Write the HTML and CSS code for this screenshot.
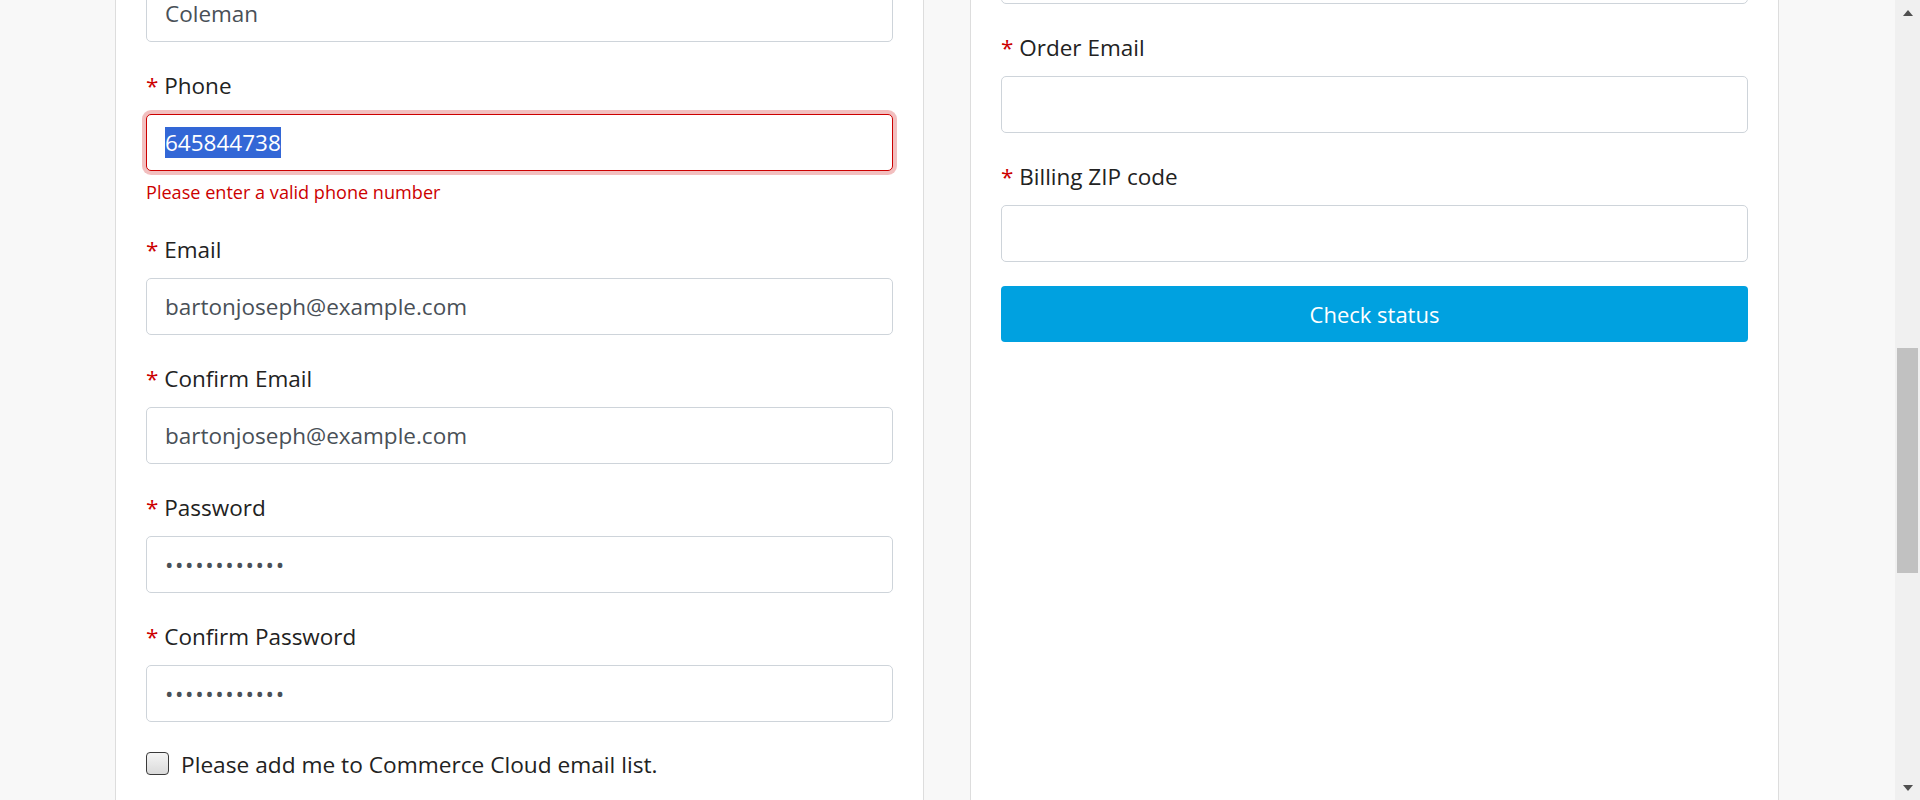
FILE: index.html
```html
<!DOCTYPE html>
<html lang="en">
<head>
<meta charset="utf-8">
<title>Create account</title>
<link rel="stylesheet" href="styles.css">
</head>
<body>
<div class="page">
  <main class="main">
    <div class="columns">
      <section class="card">
        <form class="form">
          <div class="form-group form-group--cut-left">
            <input class="form-control" type="text" value="Coleman">
          </div>
          <div class="form-group">
            <label class="form-label"><span class="req">*</span> Phone</label>
            <div class="form-control form-control--invalid"><span class="selected">645844738</span></div>
            <div class="invalid-feedback">Please enter a valid phone number</div>
          </div>
          <div class="form-group">
            <label class="form-label"><span class="req">*</span> Email</label>
            <input class="form-control" type="email" value="bartonjoseph@example.com">
          </div>
          <div class="form-group">
            <label class="form-label"><span class="req">*</span> Confirm Email</label>
            <input class="form-control" type="email" value="bartonjoseph@example.com">
          </div>
          <div class="form-group">
            <label class="form-label"><span class="req">*</span> Password</label>
            <input class="form-control form-control--password" type="password" value="abcdefghijkl">
          </div>
          <div class="form-group">
            <label class="form-label"><span class="req">*</span> Confirm Password</label>
            <input class="form-control form-control--password" type="password" value="abcdefghijkl">
          </div>
          <label class="form-check">
            <input type="checkbox" class="check">
            <span class="check-label">Please add me to Commerce Cloud email list.</span>
          </label>
        </form>
      </section>
      <section class="card">
        <form class="form">
          <div class="form-group form-group--cut-right">
            <input class="form-control" type="text">
          </div>
          <div class="form-group">
            <label class="form-label"><span class="req">*</span> Order Email</label>
            <input class="form-control" type="email">
          </div>
          <div class="form-group form-group--tight">
            <label class="form-label"><span class="req">*</span> Billing ZIP code</label>
            <input class="form-control" type="text">
          </div>
          <button type="button" class="btn-primary">Check status</button>
        </form>
      </section>
    </div>
  </main>
  <div class="scrollbar">
    <div class="sb-btn"><span class="sb-arrow sb-arrow--up"></span></div>
    <div class="sb-track"><div class="sb-thumb"></div></div>
    <div class="sb-btn"><span class="sb-arrow sb-arrow--down"></span></div>
  </div>
</div>
</body>
</html>
```

FILE: styles.css
```css
* { box-sizing: border-box; }
html, body { margin: 0; height: 100%; }
body {
  font-family: "Open Sans", "Liberation Sans", sans-serif;
  color: #222;
  background: #f8f8f8;
  overflow: hidden;
}
.page { display: flex; height: 800px; }
.main { flex: 1; padding-left: 115px; overflow: hidden; }
.columns {
  display: grid;
  grid-template-columns: 809px 809px;
  column-gap: 46px;
  height: 100%;
}
.card {
  background: #fff;
  border-left: 1px solid #ddd;
  border-right: 1px solid #ddd;
  padding: 0 30px;
  overflow: hidden;
}
.form-group { margin-bottom: 29px; }
.form-group--cut-left { margin-top: -15px; }
.form-group--cut-right { margin-top: -53px; }
.form-group--tight { margin-bottom: 24px; }
.form-label {
  display: block;
  font-size: 22.5px;
  line-height: 29px;
  margin-bottom: 14px;
  color: #222;
}
.req { color: #c00; }
.form-control {
  display: block;
  width: 100%;
  height: 57px;
  padding: 0 18px 1px;
  font-family: inherit;
  font-size: 22.5px;
  color: #495057;
  background: #fff;
  border: 1px solid #ced4da;
  border-radius: 5px;
  outline: none;
}
.form-control--password { letter-spacing: 1.6px; }
.form-control--invalid {
  display: flex;
  align-items: center;
  border-color: #c00;
  box-shadow: 0 0 0 4px rgba(204, 0, 0, 0.25);
}
.selected {
  background: #3367d6;
  color: #fff;
  line-height: 31px;
}
.invalid-feedback {
  color: #c00;
  font-size: 18.1px;
  line-height: 28px;
  margin-top: 7px;
}
.form-check {
  display: flex;
  align-items: flex-start;
  font-size: 22.7px;
  line-height: 27px;
  color: #222;
}
.check {
  appearance: none;
  -webkit-appearance: none;
  flex: none;
  width: 23px;
  height: 23px;
  margin: 1px 12px 0 0;
  border: 1px solid #3a3a3a;
  border-radius: 4px;
  background: linear-gradient(#f5f5f5, #dadada);
}
.btn-primary {
  display: block;
  width: 100%;
  height: 56px;
  border: 0;
  border-radius: 4px;
  background: #00a1e0;
  color: #fff;
  font-family: inherit;
  font-size: 22px;
}
.scrollbar {
  width: 25px;
  flex: none;
  background: #f0f0f0;
  display: flex;
  flex-direction: column;
}
.sb-btn {
  height: 25px;
  display: flex;
  align-items: center;
  justify-content: center;
}
.sb-arrow { width: 0; height: 0; border-left: 5.5px solid transparent; border-right: 5.5px solid transparent; }
.sb-arrow--up { border-bottom: 6px solid #505050; }
.sb-arrow--down { border-top: 6px solid #505050; }
.sb-track { flex: 1; padding: 0 2px; }
.sb-thumb { margin-top: 323px; height: 225px; background: #c1c1c1; }
```
